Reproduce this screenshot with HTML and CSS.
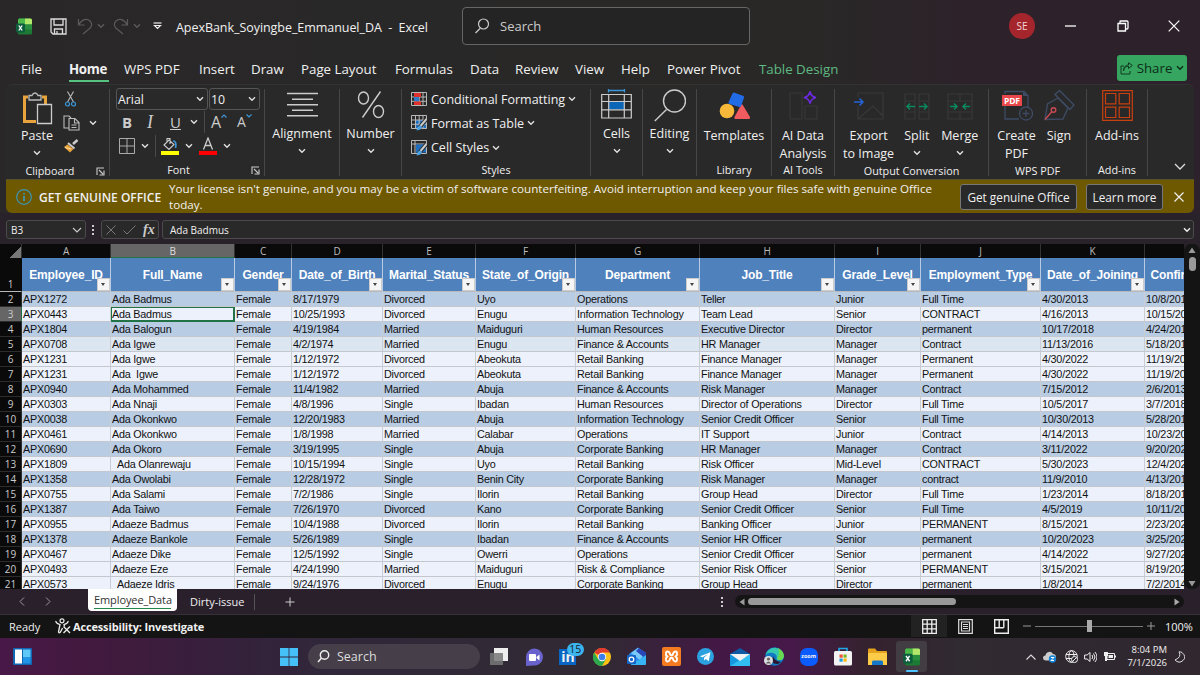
FILE: index.html
```html
<!DOCTYPE html>
<html lang="en">
<head>
    <meta charset="UTF-8" />
    <meta name="viewport" content="width=device-width, initial-scale=1.0" />
    <title>ApexBank_Soyingbe_Emmanuel_DA - Excel</title>
    <link rel="stylesheet" href="styles.css">
</head>
<body>
    <svg class="defs" width="0" height="0">
        <symbol id="chev" viewBox="0 0 8 6"><path d="M1 1.3l3 3 3-3" fill="none" stroke="currentColor" stroke-width="1.4"/></symbol>
        <symbol id="launch" viewBox="0 0 9 9"><path d="M1 8V1h7M3 3l4 4M8 3.5V8H3.5" fill="none" stroke="#ccc" stroke-width="1.1"/></symbol>
        <symbol id="excel" viewBox="0 0 16 16"><rect x="2" width="14" height="16" rx="1.5" fill="#1d7a35"/><path d="M3.500 0H9v6H2V1.500Q2 0 3.500 0z" fill="#4cb84a"/><path d="M9 0h5.500Q16 0 16 1.500V6H9z" fill="#b4e86a"/><path d="M9 6h7v5H9z" fill="#2a8f3e"/><rect y="5" width="9" height="9" rx="1.500" fill="#0d5c3c"/><path d="M2.800 7l3.400 5M6.200 7l-3.400 5" stroke="#fff" stroke-width="1.300"/></symbol>
        <symbol id="grid" viewBox="0 0 16 14"><path d="M.5.5h15v13H.5zM.5 5h15M.5 9.300h15M4.500.5v13M8.200.5v13M12 .5v13" fill="none" stroke="#b8b8b8"/></symbol>
    </svg>

    <div class="titlebar">
        <svg class="app-icon" width="16" height="17"><use href="#excel"/></svg>
        <svg class="save" width="17" height="17" viewBox="0 0 17 17"><path d="M1 1h15v15H3l-2-2zM4 1v6h9V1M4.500 16v-5h8v5M7 16v-3" fill="none" stroke="#ddd" stroke-width="1.300"/></svg>
        <svg class="undo" width="16" height="17" viewBox="0 0 16 17"><path d="M1.500 1v6h6M1.500 7C5 1 10 0 13 3s1.500 6-1 8l-6 5" fill="none" stroke="#5c5a5b" stroke-width="1.200"/></svg>
        <svg class="dim-chev" width="8" height="6"><use href="#chev"/></svg>
        <svg class="redo" width="16" height="17" viewBox="0 0 16 17"><path d="M14.500 1v6h-6M14.500 7C11 1 6 0 3 3S1.500 9 4 11l6 5" fill="none" stroke="#5c5a5b" stroke-width="1.200"/></svg>
        <svg class="dim-chev" width="8" height="6"><use href="#chev"/></svg>
        <svg class="customize" width="9" height="8" viewBox="0 0 9 8"><path d="M.5 1h8" stroke="#eee" stroke-width="1.200"/><path d="M1.500 3.500h6l-3 3z" fill="none" stroke="#eee" stroke-width="1.200"/></svg>
        <span class="doc-name">ApexBank_Soyingbe_Emmanuel_DA&nbsp; -&nbsp; Excel</span>
        <div class="search-box">
            <svg width="16" height="16" viewBox="0 0 16 16"><path d="M6 10.500L1.500 15" stroke="#ccc" stroke-width="1.200"/><circle cx="9.500" cy="6" r="5" fill="none" stroke="#ccc" stroke-width="1.200"/></svg>
            <span>Search</span>
        </div>
        <span class="avatar">SE</span>
        <svg class="win-min" width="11" height="12" viewBox="0 0 11 12"><path d="M0 6h11" stroke="#fff" stroke-width="1.300"/></svg>
        <svg class="win-max" width="12" height="12" viewBox="0 0 12 12"><path d="M1 3.500h7.500V11H1zM3 3.500V1.500q0-.5.5-.5H10q1 0 1 1v6q0 1-1 1H8.500" fill="none" stroke="#fff" stroke-width="1.300"/></svg>
        <svg class="win-close" width="12" height="12" viewBox="0 0 12 12"><path d="M.7.7l10.600 10.600M11.300.7L.7 11.300" stroke="#fff" stroke-width="1.200"/></svg>
    </div>

    <div class="tabs">
        <span class="tab-file">File</span>
        <span class="tab-home">Home</span>
        <span class="tab-wps">WPS PDF</span>
        <span class="tab-insert">Insert</span>
        <span class="tab-draw">Draw</span>
        <span class="tab-page">Page Layout</span>
        <span class="tab-formulas">Formulas</span>
        <span class="tab-data">Data</span>
        <span class="tab-review">Review</span>
        <span class="tab-view">View</span>
        <span class="tab-help">Help</span>
        <span class="tab-pivot">Power Pivot</span>
        <span class="tab-design">Table Design</span>
        <button class="share">
            <svg width="13" height="13" viewBox="0 0 13 13"><path d="M4 4H1v8h9V9M3.500 9C4 5.500 6 4.200 8.500 4.200V6.500L12.300 3.500 8.500.7V3C5 3 3.500 6 3.500 9z" fill="none" stroke="#123b22"/></svg>
            <span>Share</span>
            <svg width="8" height="6"><use href="#chev"/></svg>
        </button>
    </div>

    <div class="ribbon">
        <div class="group clipboard">
            <div class="body">
                <div class="big paste">
                    <svg width="31" height="33" viewBox="0 0 31 33"><path d="M6 5H2.500v24.500H14M20 5h3.500v7" fill="none" stroke="#e8a33d" stroke-width="3"/><path d="M7 3.500h3Q11 1 13 1t3 2.500h3v4.500H7z" fill="#292929" stroke="#bbb" stroke-width="1.300"/><path d="M15.500 12.500h14v19h-14z" fill="#292929" stroke="#ccc" stroke-width="1.300"/></svg>
                    <span>Paste</span>
                    <svg class="chev" width="8" height="6"><use href="#chev"/></svg>
                </div>
                <div class="small-col">
                    <svg width="16" height="16" viewBox="0 0 16 16"><path d="M4.500.5l6 10.500M10.500.5l-6 10.500" stroke="#bbb" stroke-width="1.100"/><circle cx="4.500" cy="13" r="2" fill="none" stroke="#3b96d9" stroke-width="1.200"/><circle cx="10.500" cy="13" r="2" fill="none" stroke="#3b96d9" stroke-width="1.200"/></svg>
                    <div class="copy-row">
                        <svg width="17" height="16" viewBox="0 0 17 16"><path d="M5.500 13H1V1h5l2 2M6 3.500h6l4 4V15H6zM11.500 3.500V8H16M8.500 10h5M8.500 12.500h5" fill="none" stroke="#bbb" stroke-width="1.100"/></svg>
                        <svg class="chev" width="8" height="6"><use href="#chev"/></svg>
                    </div>
                    <svg width="16" height="15" viewBox="0 0 16 15"><path d="M10 5l4.500-4" stroke="#ccc" stroke-width="2.500"/><path d="M5 4l6.500 5.500" stroke="#ccc" stroke-width="2"/><path d="M4.500 5.500L1 8l6 5.500 3.500-3.500z" fill="#e9a23b"/><path d="M2 8.500l6 1.500" stroke="#fbd9a0"/></svg>
                </div>
            </div>
            <div class="caption"><span>Clipboard</span><svg class="launch" width="9" height="9"><use href="#launch"/></svg></div>
        </div>
        <div class="group font">
            <div class="body">
                <div class="font-row">
                    <div class="combo name"><span>Arial</span><svg class="chev" width="8" height="6"><use href="#chev"/></svg></div>
                    <div class="combo size"><span>10</span><svg class="chev" width="8" height="6"><use href="#chev"/></svg></div>
                </div>
                <div class="style-row">
                    <b>B</b><i>I</i><u>U</u><svg class="chev" width="8" height="6"><use href="#chev"/></svg>
                    <span class="vline"></span>
                    <span class="grow">A<svg width="6" height="4" viewBox="0 0 6 4"><path d="M.5 3.500L3 1l2.500 2.500" fill="none" stroke="#3b96d9" stroke-width="1.200"/></svg></span>
                    <span class="shrink">A<svg width="6" height="4" viewBox="0 0 6 4"><path d="M.5.5L3 3 5.500.5" fill="none" stroke="#3b96d9" stroke-width="1.200"/></svg></span>
                </div>
                <div class="color-row">
                    <svg width="16" height="16" viewBox="0 0 16 16"><path d="M.5.5h15v15H.5zM8 .5v15M.5 8h15" fill="none" stroke="#aaa"/></svg>
                    <svg class="chev" width="8" height="6"><use href="#chev"/></svg>
                    <span class="vline"></span>
                    <svg width="18" height="18" viewBox="0 0 18 18"><path d="M3 8l5-5 5 4.500-5 5zM6 5V1.500h3V7" fill="none" stroke="#ccc" stroke-width="1.100"/><path d="M12 4q4 0 2.500 7" fill="none" stroke="#3b96d9" stroke-width="1.700"/><rect y="14" width="18" height="4" fill="#ff0"/></svg>
                    <svg class="chev" width="8" height="6"><use href="#chev"/></svg>
                    <svg width="18" height="18" viewBox="0 0 18 18"><path d="M4.500 12.500L9 1l4.500 11.500M6.200 8.500h5.600" fill="none" stroke="#ccc" stroke-width="1.300"/><rect y="14" width="18" height="4" fill="#f00"/></svg>
                    <svg class="chev" width="8" height="6"><use href="#chev"/></svg>
                </div>
            </div>
            <div class="caption"><span>Font</span><svg class="launch" width="9" height="9"><use href="#launch"/></svg></div>
        </div>
        <div class="group align">
            <div class="big">
                <svg width="31" height="33" viewBox="0 0 31 33"><path d="M0 4.500h31M5 10.200h21M0 15.700h31M5 21.200h21M0 26.700h31" stroke="#ccc" stroke-width="1.400"/></svg>
                <span>Alignment</span>
                <svg class="chev" width="8" height="6"><use href="#chev"/></svg>
            </div>
        </div>
        <div class="group number">
            <div class="big">
                <svg width="28" height="33" viewBox="0 0 28 33"><path d="M23.500 2.500L5.500 28.500" stroke="#ccc" stroke-width="1.400"/><ellipse cx="6.500" cy="9" rx="5" ry="6" fill="none" stroke="#ccc" stroke-width="1.400"/><ellipse cx="21.500" cy="22.500" rx="5" ry="6" fill="none" stroke="#ccc" stroke-width="1.400"/></svg>
                <span>Number</span>
                <svg class="chev" width="8" height="6"><use href="#chev"/></svg>
            </div>
        </div>
        <div class="group styles">
            <div class="body">
                <div class="style-item"><svg width="16" height="14" viewBox="0 0 16 14"><use href="#grid"/><rect x="3" y="1" width="7" height="4" fill="#e0322d"/><rect x="3" y="5" width="5" height="4.500" fill="#2e7cc9"/><rect x="3" y="9.500" width="7" height="3.500" fill="#e0322d"/></svg><span>Conditional Formatting</span><svg class="chev" width="8" height="6"><use href="#chev"/></svg></div>
                <div class="style-item"><svg width="16" height="16" viewBox="0 0 16 16"><rect x="5" y="5" width="11" height="9" fill="#1f6fbe"/><use href="#grid" width="16" height="14"/><path d="M15.500 4L8 13" stroke="#292929" stroke-width="4"/><path d="M15.500 4L9.500 11" stroke="#ccc" stroke-width="2"/><path d="M9.500 10.500q-3 0-4 5 5-.5 5.500-3.500z" fill="#4ea3e3"/></svg><span>Format as Table</span><svg class="chev" width="8" height="6"><use href="#chev"/></svg></div>
                <div class="style-item"><svg width="16" height="16" viewBox="0 0 16 16"><path d="M.5.5h15v13H.5zM.5 4h15M4 .5v13" fill="none" stroke="#b8b8b8"/><rect x="5" y="4.500" width="10" height="8" fill="#1f6fbe"/><path d="M15.500 4L8 13" stroke="#292929" stroke-width="4"/><path d="M15.500 4L9.500 11" stroke="#ccc" stroke-width="2"/><path d="M9.500 10.500q-3 0-4 5 5-.5 5.500-3.500z" fill="#4ea3e3"/></svg><span>Cell Styles</span><svg class="chev" width="8" height="6"><use href="#chev"/></svg></div>
            </div>
            <div class="caption"><span>Styles</span></div>
        </div>
        <div class="group cells">
            <div class="big">
                <svg width="31" height="33" viewBox="0 0 31 33"><path d="M7.500 1.500h16M7.500-.5v4M23.500-.5v4" stroke="#3b96d9" stroke-width="1.300"/><rect x="8" y="12.500" width="15" height="8" fill="#0c66b8"/><path d="M.7 5.500h29.600v23.500H.7zM.7 12.500h29.600M.7 20.800h29.600M7.700 5.500V29M23.300 5.500V29" fill="none" stroke="#ccc" stroke-width="1.200"/></svg>
                <span>Cells</span>
                <svg class="chev" width="8" height="6"><use href="#chev"/></svg>
            </div>
        </div>
        <div class="group editing">
            <div class="big">
                <svg width="32" height="33" viewBox="0 0 32 33"><path d="M12.500 20.500L.8 32" stroke="#ccc" stroke-width="1.400"/><circle cx="20.500" cy="12" r="11" fill="none" stroke="#ccc" stroke-width="1.400"/></svg>
                <span>Editing</span>
                <svg class="chev" width="8" height="6"><use href="#chev"/></svg>
            </div>
        </div>
        <div class="group templates wps">
            <div class="big">
                <svg width="31" height="33" viewBox="0 0 31 33"><circle cx="8" cy="22" r="7.300" fill="#f8b93b"/><path d="M23.500 15.500l7.500 12.500q.5 2-1.500 2h-13q-1.500 0-1-2l6.500-12q.8-1.200 1.500-.5z" fill="#ef5b5f"/><path d="M13.500 4.500q.8-1.200 2-.8l8.500 3q1.500.5 1 2l-3 8.500q-.5 1-1.500.7l-10-3q-1.500-.5-1-1.700z" fill="#226be6"/></svg>
                <span>Templates</span>
            </div>
            <div class="caption"><span>Library</span></div>
        </div>
        <div class="group ai wps">
            <div class="big">
                <svg width="30" height="33" viewBox="0 0 30 33"><path d="M2 4h12v26H2zM17 17h12v13H17z" fill="none" stroke="#383838" stroke-width="1.200"/><path d="M22 2.500q1 5.500 6 6-5 1-6 6-1-5-6-6 5-.5 6-6z" fill="none" stroke="#6c2be0" stroke-width="1.600"/></svg>
                <span>AI Data<br>Analysis</span>
            </div>
            <div class="caption"><span>AI Tools</span></div>
        </div>
        <div class="group output wps">
            <div class="body">
                <div class="big export">
                    <svg width="31" height="33" viewBox="0 0 31 33"><path d="M5 8V4h25v26H5V17M5 30L20 17l10 10" fill="none" stroke="#393939" stroke-width="1.200"/><path d="M1 13h9M6.500 9.500L10 13l-3.500 3.500" fill="none" stroke="#2463d9" stroke-width="1.500"/></svg>
                    <span>Export<br>to Image</span>
                </div>
                <div class="big split">
                    <svg width="26" height="33" viewBox="0 0 26 33"><path d="M1 5h10v25H1zM1 12h10M1 23h10M15 5h10v25H15zM15 12h10M15 23h10" fill="none" stroke="#383838" stroke-width="1.200"/><path d="M3 17.500h8M6 14.500l-3 3 3 3M15 17.500h8M20 14.500l3 3-3 3" fill="none" stroke="#0b8a5d" stroke-width="1.500"/></svg>
                    <span>Split</span>
                    <svg class="chev" width="8" height="6"><use href="#chev"/></svg>
                </div>
                <div class="big merge">
                    <svg width="26" height="33" viewBox="0 0 26 33"><path d="M1 5h24v25H1zM1 12h24M1 23h24M13 5v7M13 23v7" fill="none" stroke="#383838" stroke-width="1.200"/><path d="M3 17.500h7M7 14.500l3 3-3 3M16 17.500h7M19 14.500l-3 3 3 3" fill="none" stroke="#0b8a5d" stroke-width="1.500"/></svg>
                    <span>Merge</span>
                    <svg class="chev" width="8" height="6"><use href="#chev"/></svg>
                </div>
            </div>
            <div class="caption"><span>Output Conversion</span></div>
        </div>
        <div class="group wpspdf wps">
            <div class="body">
                <div class="big create">
                    <svg width="32" height="33" viewBox="0 0 32 33"><path d="M4 5V2.500h19l4 4V19M4 14v16h14" fill="none" stroke="#3d4b63" stroke-width="1.300"/><path d="M22 2v5h5z" fill="#3d4b63"/><rect x="1" y="6" width="20" height="11" fill="#e8474b"/><text x="3" y="14.800" font-size="8.500" font-weight="bold" fill="#fff" font-family="Open Sans, sans-serif" textLength="16">PDF</text><circle cx="25" cy="24.500" r="6.500" fill="#292929" stroke="#3d4b63" stroke-width="1.300"/><path d="M25 21v7M21.500 24.500h7" stroke="#3d4b63" stroke-width="1.300"/></svg>
                    <span>Create<br>PDF</span>
                </div>
                <div class="big sign">
                    <svg width="32" height="33" viewBox="0 0 32 33"><path d="M2 30.500L4.500 15 15 9l10 10-5 11zM12 5.500L16.500 1.500 31 16l-4 4.500z" fill="none" stroke="#3d4b63" stroke-width="1.400"/><path d="M2 30.500l7-8" stroke="#c94a52" stroke-width="1.400"/><circle cx="10.500" cy="21" r="2.300" fill="none" stroke="#c94a52" stroke-width="1.400"/></svg>
                    <span>Sign</span>
                </div>
            </div>
            <div class="caption"><span>WPS PDF</span></div>
        </div>
        <div class="group addins wps">
            <div class="big">
                <svg width="31" height="33" viewBox="0 0 31 33"><path d="M.7 1.700h29.600v29.600H.7zM3.500 4.500h10.300v10.300H3.500zM17.200 4.500h10.300v10.300H17.200zM3.500 18.200h10.300v10.300H3.500zM17.200 18.200h10.300v10.300H17.200z" fill="none" stroke="#c8400f" stroke-width="1.200"/></svg>
                <span>Add-ins</span>
            </div>
            <div class="caption"><span>Add-ins</span></div>
        </div>
        <svg class="collapse" width="12" height="8" viewBox="0 0 12 8"><path d="M1 1l5 5 5-5" fill="none" stroke="#ddd" stroke-width="1.300"/></svg>
    </div>

    <div class="license">
        <svg width="16" height="16" viewBox="0 0 16 16"><circle cx="8" cy="8" r="7.300" fill="none" stroke="#3b96b5" stroke-width="1.200"/><path d="M8 7v5M8 4v1.500" stroke="#3ba0cf" stroke-width="1.500"/></svg>
        <b>GET GENUINE OFFICE</b>
        <p>Your license isn't genuine, and you may be a victim of software counterfeiting. Avoid interruption and keep your files safe with genuine Office<br>today.</p>
        <button class="get">Get genuine Office</button>
        <button class="learn">Learn more</button>
        <svg class="x" width="10" height="10" viewBox="0 0 10 10"><path d="M.5.5l9 9M9.500.5l-9 9" stroke="#eee" stroke-width="1.200"/></svg>
    </div>

    <div class="formula-bar">
        <div class="box cell-ref"><span>B3</span><svg width="10" height="6" viewBox="0 0 10 6"><path d="M1 1l4 4 4-4" fill="none" stroke="#ccc" stroke-width="1.100"/></svg></div>
        <span class="dots"></span>
        <div class="box fx">
            <svg width="10" height="10" viewBox="0 0 10 10"><path d="M.5.5l9 9M9.500.5l-9 9" stroke="#777"/></svg>
            <svg width="13" height="10" viewBox="0 0 13 10"><path d="M.5 5.500l3.500 3.500L12.500.5" fill="none" stroke="#777"/></svg>
            <i>fx</i>
        </div>
        <div class="box content"><span>Ada Badmus</span><svg width="8" height="6"><use href="#chev"/></svg></div>
    </div>

    <div class="sheet">
        <div class="grid-clip">
            <table id="grid-table">
                <colgroup><col class="c-row"><col class="c-a"><col class="c-b"><col class="c-c"><col class="c-d"><col class="c-e"><col class="c-f"><col class="c-g"><col class="c-h"><col class="c-i"><col class="c-j"><col class="c-k"><col class="c-l"></colgroup>
            </table>
        </div>
        <div class="vscroll">
            <svg width="8" height="7" viewBox="0 0 8 7"><path d="M4 .5L7.500 6h-7z" fill="#999"/></svg>
            <span class="thumb"></span>
            <svg class="down" width="8" height="7" viewBox="0 0 8 7"><path d="M4 6.500L.5 1h7z" fill="#999"/></svg>
        </div>
    </div>

    <div class="sheet-tabs">
        <svg class="prev" width="6" height="9" viewBox="0 0 6 9"><path d="M5 .5l-4 4 4 4" fill="none" stroke="#999"/></svg>
        <svg class="next" width="6" height="9" viewBox="0 0 6 9"><path d="M1 .5l4 4-4 4" fill="none" stroke="#999"/></svg>
        <div class="sheet-tab active"><span>Employee_Data</span></div>
        <div class="sheet-tab">Dirty-issue</div>
        <svg class="plus" width="10" height="10" viewBox="0 0 10 10"><path d="M5 .5v9M.5 5h9" stroke="#ccc"/></svg>
        <span class="dots"></span>
        <div class="hscroll">
            <svg width="6" height="8" viewBox="0 0 6 8"><path d="M.5 4L5.500.5v7z" fill="#999"/></svg>
            <span class="thumb"></span>
            <svg class="right" width="6" height="8" viewBox="0 0 6 8"><path d="M5.500 4L.5.5v7z" fill="#aaa"/></svg>
        </div>
    </div>

    <div class="status">
        <span class="ready">Ready</span>
        <svg width="16" height="16" viewBox="0 0 16 16"><circle cx="7" cy="2.800" r="2" fill="none" stroke="#eee" stroke-width="1.200"/><path d="M1 3q-.5 2 4 3.500L3.500 14q1 2 2.500-1l1.500-3M13 3q.5 2-4 3.500l.5 2M8.500 8.500L15 15M15 8.500L8.500 15" fill="none" stroke="#eee" stroke-width="1.300"/></svg>
        <b>Accessibility: Investigate</b>
        <div class="view active"><svg width="15" height="15" viewBox="0 0 15 15"><path d="M.7.7h13.600v13.600H.7zM.7 5.200h13.600M.7 9.800h13.600M5.200.7v13.600M9.800.7v13.600" fill="none" stroke="#eee" stroke-width="1.300"/></svg></div>
        <div class="view"><svg width="15" height="15" viewBox="0 0 15 15"><path d="M.7.7h13.600v13.600H.7zM3.500 3h8v9h-8zM5 5.500h5M5 7.500h5M5 9.500h5" fill="none" stroke="#ddd" stroke-width="1.200"/></svg></div>
        <div class="view"><svg width="15" height="15" viewBox="0 0 15 15"><path d="M.7.7h13.600v13.600H.7zM5.200.7v8M9.800.7v8M.7 8.700h9" fill="none" stroke="#eee" stroke-width="1.400"/></svg></div>
        <svg class="minus" width="8" height="8" viewBox="0 0 8 8"><path d="M0 4h8" stroke="#999"/></svg>
        <div class="zoom-track"><span></span></div>
        <svg class="zoom-plus" width="8" height="8" viewBox="0 0 8 8"><path d="M0 4h8M4 0v8" stroke="#999"/></svg>
        <span class="percent">100%</span>
    </div>

    <div class="taskbar">
        <svg class="widgets" width="19" height="17" viewBox="0 0 19 17"><rect width="19" height="17" rx="1" fill="#1267b4"/><rect x="2" y="1.500" width="7" height="14" fill="#fff"/><rect x="10" y="1.500" width="7.500" height="8" fill="#5fc9f8"/><rect x="10" y="9.500" width="7.500" height="6" fill="#2196e8"/></svg>
        <svg class="start" width="18" height="18" viewBox="0 0 18 18"><path d="M0 0h8.600v8.600H0zM9.400 0H18v8.600H9.400zM0 9.400h8.600V18H0zM9.400 9.400H18V18H9.400z" fill="#45c1f8"/></svg>
        <div class="task-search"><svg width="13" height="13" viewBox="0 0 13 13"><circle cx="7.500" cy="5" r="4.200" fill="none" stroke="#eee" stroke-width="1.400"/><path d="M4.500 8L1 12" stroke="#eee" stroke-width="1.500"/></svg><span>Search</span></div>
        <div class="apps">
            <div><svg width="20" height="18" viewBox="0 0 20 18"><rect x="5" width="14" height="13" fill="#eee"/><rect x="1" y="5" width="13" height="12" fill="#777" opacity=".85"/></svg></div>
            <div><svg width="18" height="18" viewBox="0 0 18 18"><path d="M1 18V9a8.500 8.500 0 1 1 8 8.500z" fill="#6962cc"/><rect x="4" y="6" width="7" height="7" rx="1" fill="#fff"/><path d="M11.500 9l3-2.500v6l-3-2.500z" fill="#fff"/></svg></div>
            <div class="linkedin"><span>in</span><em>15</em></div>
            <div><svg width="18" height="18" viewBox="0 0 18 18"><circle cx="9" cy="9" r="9" fill="#fbc116"/><path d="M9 9L1.200 4.500A9 9 0 0 1 16.800 4.500H9z" fill="#e33b2e"/><path d="M1.200 4.500A9 9 0 0 0 9 18l4-7-8 0z" fill="#2da94f"/><circle cx="9" cy="9" r="4.200" fill="#fff"/><circle cx="9" cy="9" r="3.300" fill="#3f7de8"/></svg></div>
            <div><svg width="20" height="19" viewBox="0 0 20 19"><path d="M2 7l9-6.500L19 6v10q0 2-2 2H4z" fill="#2c8df0"/><path d="M4 6l7-5 7 5-5 7z" fill="#7ac8f8"/><path d="M9 4l10 8V6l-7-5z" fill="#2946b8"/><path d="M4 18L19 8v9q0 1-1 1z" fill="#36b4f4"/><rect y="8" width="9" height="9" rx="1" fill="#1465c6"/><circle cx="4.500" cy="12.500" r="2.300" fill="none" stroke="#fff" stroke-width="1.300"/></svg></div>
            <div><svg width="19" height="19" viewBox="0 0 19 19"><rect width="19" height="19" rx="2" fill="#f47b20"/><path d="M4 9.500V6q0-1.500 1.500-1.500T8 6.500v1q1.500 1.500 3 0v-1q1-2 2.500-2T15 6v2l-1.500 1.500L15 11v2q0 1.500-1.500 1.500t-2.500-2v-1q-1.500-1.500-3 0v1q-1 2-2.500 2T4 13v-2l1.500-1.500L4 8" fill="none" stroke="#fff" stroke-width="1.800"/></svg></div>
            <div><svg width="17" height="17" viewBox="0 0 17 17"><circle cx="8.500" cy="8.500" r="8.500" fill="#2ba2df"/><path d="M3 8.300l10.500-4-1.800 9-3-2.300-1.500 1.500-.3-2.700 4-3.500-5.300 3z" fill="#fff"/></svg></div>
            <div><svg width="20" height="18" viewBox="0 0 20 18"><path d="M0 6l10-6 10 6v12H0z" fill="#0f5aa5"/><path d="M0 6l20 12H0z" fill="#1698e0"/><path d="M20 6L0 18h20z" fill="#31bff2"/><path d="M0 6h20l-10 7z" fill="#f2f2f2"/></svg></div>
            <div><svg width="20" height="19" viewBox="0 0 20 19"><circle cx="10.500" cy="9.500" r="9.300" fill="#0f79c4"/><path d="M1.500 8A9.300 9.300 0 0 1 19.800 9q0 4-4 4.300-4 .2-3-2.300Q13 7 9 6 4 5 1.500 8z" fill="#35c7b0"/><path d="M14 1q6 3 5.800 8-.2 4-4 4.200L13 12q3-5 1-11z" fill="#69d84f"/><path d="M9 9q1 5 8 6l-3 2Q6 18 9 9z" fill="#2a1832"/><circle cx="4.500" cy="13.500" r="4.500" fill="#ddd"/><circle cx="4.500" cy="12" r="1.600" fill="#666"/><path d="M1.800 16.500q2.700-4 5.400 0z" fill="#666"/></svg></div>
            <div class="zoom-app"><span>zoom</span></div>
            <div><svg width="18" height="19" viewBox="0 0 18 19"><path d="M5 5V1.500h8V5" fill="none" stroke="#21a7e8" stroke-width="1.600"/><rect y="4" width="18" height="14.500" rx="1.500" fill="#f3f3f3"/><path d="M5.500 7.500h3.200v3.200H5.500z" fill="#ef5130"/><path d="M9.500 7.500h3.200v3.200H9.500z" fill="#7db829"/><path d="M5.500 11.500h3.200v3.200H5.500z" fill="#1c9fdf"/><path d="M9.500 11.500h3.200v3.200H9.500z" fill="#fbb813"/></svg></div>
            <div><svg width="19" height="18" viewBox="0 0 19 18"><path d="M0 1.500Q0 .5 1 .5h6l2 2.500h9q1 0 1 1V17H0z" fill="#e5a21c"/><path d="M0 5h19v12H0z" fill="#fccc48"/><path d="M4 17v-3q0-1.500 1.500-1.500h8q1.500 0 1.500 1.500v3z" fill="#1577c8"/></svg></div>
            <div class="open"><svg width="17" height="18"><use href="#excel"/></svg></div>
        </div>
        <div class="tray">
            <svg class="up" width="10" height="6" viewBox="0 0 10 6"><path d="M.5 5.500L5 1l4.500 4.500" fill="none" stroke="#ddd" stroke-width="1.100"/></svg>
            <svg class="cloud" width="14" height="12" viewBox="0 0 14 12"><path d="M2.500 9.500a2.500 2.500 0 0 1 0-5A4 4 0 0 1 10 3q3 0 3 3.500T10 9.500z" fill="#ccc"/><circle cx="9.500" cy="8" r="3.700" fill="#1583d8"/><path d="M8 6.500h3L8 9.500h3" stroke="#fff" fill="none"/></svg>
            <svg class="globe" width="13" height="13" viewBox="0 0 13 13"><circle cx="6.500" cy="6.500" r="5.800" fill="none" stroke="#eee"/><ellipse cx="6.500" cy="6.500" rx="2.600" ry="5.800" fill="none" stroke="#eee"/><path d="M1 4.500h11M1 8.500h6" stroke="#eee"/><circle cx="9.500" cy="9.500" r="3" fill="#302a33" stroke="#eee"/><path d="M7.500 11.500l4-4" stroke="#eee"/></svg>
            <svg class="sound" width="13" height="12" viewBox="0 0 13 12"><path d="M.6 4h2.500L6 1.500v9L3.100 8H.6zM8 4q1.500 2 0 4M9.500 2.500q3 3.500 0 7M11 1q4 5 0 10" fill="none" stroke="#eee"/></svg>
            <svg class="battery" width="13" height="11" viewBox="0 0 13 11"><path d="M4 2.500h7.500v6H4zM12.500 4.500v2" fill="none" stroke="#eee"/><path d="M5.500 4H10v3H5.500zM1 1h4v4H1zM2 5h2v5H2z" fill="#eee"/></svg>
            <div class="clock">8:04 PM<br>7/1/2026</div>
            <svg class="moon" width="11" height="12" viewBox="0 0 11 12"><path d="M5 .8q3 5.200-4 8.200 4 4 8 .5T8 1.500Q7 .8 5 .8z" fill="none" stroke="#ddd"/></svg>
        </div>
    </div>
    <script src="script.js"></script>
</body>
</html>
```
FILE: styles.css
```css
* {
    box-sizing: border-box;
}
body {
    margin: 0;
    width: 1200px;
    height: 675px;
    overflow: hidden;
    display: flex;
    flex-direction: column;
    background: linear-gradient(90deg, #2a2729, #292828 30%, #292827 68%, #2d222a 80%, #2d212b);
    color: #f0f0f0;
    font-family: "Open Sans", "Noto Sans", sans-serif;
    font-size: 13px;
    white-space: nowrap;
}
svg {
    flex: none;
    display: block;
}
.defs {
    position: absolute;
}
button {
    font: inherit;
    padding: 0;
    white-space: nowrap;
}
.chev {
    color: #e0e0e0;
}

/* title bar */
.titlebar {
    height: 52px;
    flex: none;
    display: flex;
    align-items: center;
    padding-left: 16px;
}
.save {
    margin-left: 18px;
}
.undo {
    margin-left: 10px;
}
.dim-chev {
    color: #5c5a5b;
    margin-left: 4px;
}
.redo {
    margin-left: 8px;
}
.customize {
    margin-left: 12px;
}
.doc-name {
    margin-left: 14px;
    width: 286px;
    font-size: 12.5px;
    letter-spacing: -.05px;
    padding-top: 3px;
}
.search-box {
    width: 288px;
    height: 38px;
    flex: none;
    border: 1px solid #666;
    border-radius: 4px;
    background: #252424;
    display: flex;
    align-items: center;
    gap: 10px;
    padding-left: 11px;
    padding-bottom: 1px;
    font-size: 13px;
    color: #ccc;
}
.avatar {
    width: 26px;
    height: 26px;
    border-radius: 50%;
    background: #a4262c;
    color: #f3d6d7;
    font-size: 10px;
    line-height: 26px;
    text-align: center;
    margin-left: 259px;
}
.win-min {
    margin-left: 30px;
}
.win-max {
    margin-left: 41px;
}
.win-close {
    margin-left: 39px;
}

/* ribbon tabs */
.tabs {
    height: 32px;
    flex: none;
    display: flex;
    align-items: flex-start;
    padding-left: 21px;
    line-height: 20px;
    padding-top: 7px;
    font-size: 13.3px;
}
.tabs > span {
    flex: none;
}
.tab-file { width: 48px; }
.tab-home { width: 40px; margin-right: 15px; font-weight: bold; border-bottom: 2px solid #55c27f; padding-bottom: 1px; letter-spacing: -.3px; }
.tab-wps { width: 75px; }
.tab-insert { width: 52px; }
.tab-draw { width: 50px; }
.tab-page { width: 94px; }
.tab-formulas { width: 75px; }
.tab-data { width: 45px; }
.tab-review { width: 60px; }
.tab-view { width: 46px; }
.tab-help { width: 46px; }
.tab-pivot { width: 92px; }
.tab-design { width: 358px; color: #5fba83; }
.share {
    width: 70px;
    height: 26px;
    margin-top: -4px;
    border: 0;
    border-radius: 3px;
    background: #35a55f;
    color: #0c2c18;
    display: flex;
    align-items: center;
    justify-content: center;
    gap: 4px;
}

/* ribbon */
.ribbon {
    height: 95px;
    flex: none;
    margin: 0 6px;
    background: #292929;
    border-radius: 6px 6px 0 0;
    border-top: 1px solid #333;
    display: flex;
    padding-left: 1px;
}
.group {
    flex: none;
    display: flex;
    flex-direction: column;
    height: 87px;
    margin-top: 4px;
    border-right: 1px solid #474747;
}
.clipboard { width: 103px; }
.font { width: 155px; }
.align { width: 75px; }
.number { width: 62px; }
.styles { width: 189px; }
.cells { width: 52px; }
.editing { width: 54px; }
.templates { width: 75px; }
.ai { width: 63px; }
.output { width: 154px; }
.wpspdf { width: 98px; }
.addins { width: 61px; }
.body {
    display: flex;
    height: 74px;
}
.big {
    display: flex;
    flex-direction: column;
    align-items: center;
    height: 74px;
    text-align: center;
    line-height: 18px;
    font-size: 12.5px;
}
.align .big svg:first-child, .number .big svg:first-child {
    position: relative;
    top: 0;
}
.big span {
    margin-top: 3px;
}
.big .chev {
    margin-top: 5px;
}
.wps .big span {
    margin-top: 5px;
    line-height: 17.5px;
}
.wps .chev {
    margin-top: 5px;
}
.caption {
    position: relative;
    height: 14px;
    line-height: 15px;
    font-size: 10.8px;
    text-align: center;
}
.launch {
    position: absolute;
    right: 4px;
    top: 4px;
}
.clipboard .caption span {
    margin-right: 16px;
}
.font .caption span {
    margin-right: 17px;
}
.paste {
    width: 60px;
    padding-top: 3px;
}
.paste span {
    margin-top: 2px;
}
.small-col {
    display: flex;
    flex-direction: column;
    gap: 8px;
    padding-top: 2px;
    margin-left: -4px;
}
.copy-row {
    display: flex;
    align-items: center;
    gap: 9px;
}
.font .body {
    flex-direction: column;
    padding-left: 6px;
    margin-top: -1px;
    height: 75px;
}
.font-row {
    display: flex;
    gap: 1px;
}
.combo {
    height: 22px;
    border: 1px solid #555;
    border-radius: 3px;
    display: flex;
    align-items: center;
    justify-content: space-between;
    padding: 0 3px 0 1px;
    font-size: 12.3px;
}
.combo.name { width: 92px; }
.combo.size { width: 51px; }
.style-row {
    display: flex;
    align-items: center;
    height: 24px;
    font-size: 15px;
    color: #ccc;
    padding-left: 6px;
}
.style-row b { width: 25px; }
.style-row i {
    width: 23px;
    font-family: "Liberation Serif", serif;
    font-size: 18px;
}
.style-row u { width: 20px; }
.vline {
    width: 1px;
    height: 22px;
    background: #4a4a4a;
    margin: 0 6px;
}
.grow, .shrink {
    display: flex;
    align-items: flex-start;
    line-height: 16px;
}
.grow { width: 26px; font-size: 16px; }
.shrink { font-size: 14px; }
.color-row {
    display: flex;
    align-items: center;
    padding-left: 3px;
    height: 24px;
}
.color-row .chev {
    margin: 0 6px;
}
.color-row .vline {
    margin: 0 5px 0 0;
}
.styles .body {
    flex-direction: column;
    padding: 0 0 0 9px;
    margin-top: -2px;
    height: 76px;
}
.style-item {
    display: flex;
    align-items: center;
    height: 24.3px;
    font-size: 12.5px;
}
.style-item span {
    margin: 0 3px 0 4px;
}
.output .export { width: 69px; }
.output .split { width: 30px; }
.output .merge { width: 58px; }
.create { width: 55px; }
.sign { width: 30px; }
.collapse {
    margin: 78px 0 0 26px;
}

/* license warning */
.license {
    height: 34px;
    flex: none;
    margin: 0 6px;
    background: #6e5800;
    border-top: 1px solid #55502f;
    border-radius: 0 0 6px 6px;
    display: flex;
    align-items: center;
    padding-left: 10px;
    font-size: 12px;
}
.license b {
    width: 130px;
    margin-left: 7px;
    font-weight: 600;
    padding-top: 2px;
}
.license p {
    width: 791px;
    margin: 0;
    padding-top: 1px;
    line-height: 16.500px;
    font-size: 11.650px;
}
.license button {
    height: 26px;
    flex: none;
    background: #292929;
    color: #f0f0f0;
    border: 1px solid #777;
    border-radius: 3px;
    font-size: 11.8px;
}
.license .get { width: 117px; }
.license .learn {
    width: 77px;
    margin-left: 9px;
}
.x {
    margin-left: 11px;
}

/* formula bar */
.formula-bar {
    height: 31px;
    flex: none;
    background: #2a222a;
    display: flex;
    align-items: center;
    padding: 2px 6px 0;
    font-size: 10px;
}
.box {
    height: 19px;
    border: 1px solid #4b4b4b;
    border-radius: 3px;
    background: #292929;
    display: flex;
    align-items: center;
}
.cell-ref {
    width: 80px;
    justify-content: space-between;
    padding: 0 3px 0 4px;
}
.dots {
    width: 2px;
    height: 10px;
    background: repeating-linear-gradient(#ccc 0 2px, transparent 2px 4px);
}
.formula-bar .dots {
    margin: 0 7px 0 6px;
}
.fx {
    width: 58px;
    padding-left: 4px;
    gap: 7px;
}
.fx i {
    font: italic bold 14px "Liberation Serif", serif;
    color: #ccc;
    line-height: 14px;
}
.content {
    flex: 1;
    margin-left: 3px;
    padding: 0 2px 0 7px;
    justify-content: space-between;
}

/* worksheet */
.sheet {
    height: 345px;
    flex: none;
    display: flex;
    background: #2a212b;
}
.grid-clip {
    width: 1184px;
    overflow: hidden;
}
table {
    width: 1230px;
    table-layout: fixed;
    border-collapse: separate;
    border-spacing: 0;
    font-family: "Liberation Sans", Arial, sans-serif;
    font-size: 10.8px;
    letter-spacing: -.22px;
    color: #111;
    background: #0a0a0a;
}
.c-row { width: 22px; }
.c-a { width: 89px; }
.c-b { width: 124px; }
.c-c { width: 57px; }
.c-d { width: 91px; }
.c-e { width: 93px; }
.c-f { width: 100px; }
.c-g { width: 124px; }
.c-h { width: 135px; }
.c-i { width: 86px; }
.c-j { width: 120px; }
.c-k { width: 104px; }
.c-l { width: 85px; }
th, td {
    padding: 0;
    overflow: hidden;
}
.letters th {
    height: 14px;
    font: 10px "Open Sans", sans-serif;
    line-height: 14px;
    color: #bbb;
    border-right: 1px solid #333;
}
.letters th.picked {
    background: #666;
    color: #ddd;
    box-shadow: inset 0 -1px #217346;
}
.letters th.corner {
    background: linear-gradient(135deg, transparent 66%, #777 67%);
}
.num {
    font: 10px "Open Sans", sans-serif;
    letter-spacing: 0;
    color: #ccc;
    background: #0a0a0a;
    text-align: center;
    border-bottom: 1px solid #2c2c2c;
    line-height: 14px;
}
.fields td {
    height: 34px;
    position: relative;
    background: #4f81bd;
    color: #fff;
    font-weight: bold;
    font-size: 12px;
    letter-spacing: -.15px;
    text-align: center;
    border-right: 1px solid #b9cbe2;
    border-bottom: 1px solid #b9b9b9;
}
.fields .num {
    background: #0a0a0a;
    color: #ccc;
    font-weight: normal;
    font-size: 10px;
    vertical-align: bottom;
    border-right: 1px solid #0a0a0a;
}
.filter {
    position: absolute;
    right: 0;
    bottom: 0;
    width: 13px;
    height: 13px;
    background: #f5f5f5;
    border: 1px solid #ccc;
}
.filter::after {
    content: "";
    position: absolute;
    left: 3px;
    top: 4px;
    border: 2.500px solid transparent;
    border-top: 3px solid #444;
    border-bottom: 0;
}
.row td {
    height: 15px;
    line-height: 14px;
    padding-left: 1px;
    border-right: 1px solid #c9cdd4;
    border-bottom: 1px solid #c4c8ce;
    background: #ecf1fb;
    white-space: pre;
}
.row .num {
    padding: 0;
    background: #0a0a0a;
    border-color: #2c2c2c;
}
.row .num.picked {
    background: #666;
    border-right-color: #217346;
}
.row.dark td:not(.num) {
    background: #b8cce4;
}
.row.mid td:not(.num) {
    background: #dce6f1;
}
.row td.selected {
    box-shadow: inset 0 0 0 1px #217346;
    border-color: #217346;
}
.vscroll {
    width: 16px;
    background: #141414;
    border-radius: 7px;
    display: flex;
    flex-direction: column;
    align-items: center;
    padding-top: 3px;
}
.vscroll .thumb {
    width: 7px;
    height: 14px;
    margin-top: 3px;
    border-radius: 4px;
    background: #999;
}
.vscroll .down {
    margin-top: auto;
    margin-bottom: 2px;
}

/* sheet tabs */
.sheet-tabs {
    height: 25px;
    flex: none;
    background: #2a202b;
    display: flex;
    align-items: center;
    font-size: 11px;
    padding-left: 19px;
}
.next {
    margin-left: 20px;
}
.sheet-tab {
    height: 16px;
    line-height: 16px;
    padding: 0 10px 0 9px;
    border-right: 1px solid #555;
}
.sheet-tab.active {
    width: 89px;
    height: 22px;
    align-self: flex-start;
    margin: 0 4px 0 37px;
    padding: 2px 6px;
    background: #fff;
    color: #333;
    border: 0;
    border-radius: 0 0 4px 4px;
}
.active span {
    display: block;
    line-height: 17px;
    letter-spacing: -.1px;
    border-bottom: 1.500px solid #21874b;
}
.plus {
    margin-left: 30px;
}
.sheet-tabs .dots {
    margin-left: 426px;
}
.hscroll {
    width: 449px;
    height: 13px;
    margin-left: 12px;
    background: #141414;
    border-radius: 7px;
    display: flex;
    align-items: center;
    padding: 0 4px;
}
.hscroll .thumb {
    width: 208px;
    height: 7px;
    margin-left: 3px;
    border-radius: 4px;
    background: #999;
}
.hscroll .right {
    margin-left: auto;
}

/* status bar */
.status {
    height: 24px;
    flex: none;
    background: #141414;
    border-top: 1px solid #383038;
    display: flex;
    align-items: center;
    padding: 0 0 1px 9px;
    font-size: 11px;
}
.ready {
    width: 46px;
}
.status b {
    margin-left: 2px;
    letter-spacing: -.15px;
    flex: 0 0 838px;
}
.view {
    width: 36px;
    height: 22px;
    flex: none;
    display: flex;
    align-items: center;
    justify-content: center;
}
.view.active {
    background: #222;
}
.minus {
    margin-left: 4px;
}
.zoom-track {
    width: 108px;
    height: 1px;
    flex: none;
    margin: 0 4px;
    background: #777;
    display: flex;
    align-items: center;
}
.zoom-track span {
    width: 5px;
    height: 12px;
    flex: none;
    margin-left: 52px;
    background: #aaa;
}
.percent {
    margin-left: 10px;
}

/* taskbar */
.taskbar {
    flex: 1;
    display: flex;
    align-items: center;
    background: linear-gradient(90deg, #481948, #43193f 7%, #34213b 20%, #30283a 28%, #312a33 50%, #431845 60%, #46194a 66%, #35222f 72%, #302a31 80%, #30272f);
    padding-left: 13px;
}
.start {
    margin-left: 248px;
}
.task-search {
    width: 172px;
    height: 25px;
    flex: none;
    margin-left: 10px;
    border-radius: 13px;
    background: #463f49;
    display: flex;
    align-items: center;
    gap: 7px;
    padding-left: 9px;
    font-size: 12.5px;
    color: #ddd;
}
.apps {
    display: flex;
    margin-left: 2px;
}
.apps > div {
    width: 34.400px;
    height: 31px;
    display: flex;
    align-items: center;
    justify-content: center;
    position: relative;
}
.linkedin span {
    width: 17px;
    height: 16px;
    background: #0a66c2;
    font-weight: bold;
    font-size: 14px;
    line-height: 15px;
    text-align: center;
}
.linkedin em {
    position: absolute;
    left: 16px;
    top: 2px;
    width: 17px;
    height: 13px;
    border-radius: 7px;
    background: #3cb4ee;
    color: #14222c;
    font: 10.500px/13px "Open Sans", sans-serif;
    text-align: center;
}
.zoom-app span {
    width: 18px;
    height: 18px;
    border-radius: 7px;
    background: #0b5cff;
    font-size: 5.5px;
    font-weight: bold;
    line-height: 17px;
    text-align: center;
}
.apps > .open {
    background: #413d43;
    border-radius: 3px;
    width: 31px;
    margin-left: 1px;
}
.open::after {
    content: "";
    position: absolute;
    bottom: 0;
    left: 10px;
    width: 12px;
    height: 2px;
    border-radius: 1px;
    background: #4cc2ff;
}
.tray {
    margin-left: auto;
    display: flex;
    align-items: center;
    padding-right: 15px;
}
.cloud { margin-left: 7px; }
.globe { margin-left: 8px; }
.sound { margin-left: 6px; }
.battery { margin-left: 6px; }
.clock {
    width: 51px;
    font-size: 9.500px;
    line-height: 12.500px;
    text-align: right;
}
.moon { margin-left: 7px; }
```
FILE: script.js
```js
const fields = ['Employee_ID', 'Full_Name', 'Gender', 'Date_of_Birth', 'Marital_Status', 'State_of_Origin', 'Department', 'Job_Title', 'Grade_Level', 'Employment_Type', 'Date_of_Joining', 'Confirmation'];

const rows = [
    'APX1272|Ada Badmus|Female|8/17/1979|Divorced|Uyo|Operations|Teller|Junior|Full Time|4/30/2013|10/8/2013',
    'APX0443|Ada Badmus|Female|10/25/1993|Divorced|Enugu|Information Technology|Team Lead|Senior|CONTRACT|4/16/2013|10/15/2013',
    'APX1804|Ada Balogun|Female|4/19/1984|Married|Maiduguri|Human Resources|Executive Director|Director|permanent|10/17/2018|4/24/2019',
    'APX0708|Ada Igwe|Female|4/2/1974|Married|Enugu|Finance & Accounts|HR Manager|Manager|Contract|11/13/2016|5/18/2017',
    'APX1231|Ada Igwe|Female|1/12/1972|Divorced|Abeokuta|Retail Banking|Finance Manager|Manager|Permanent|4/30/2022|11/19/2022',
    'APX1231|Ada  Igwe|Female|1/12/1972|Divorced|Abeokuta|Retail Banking|Finance Manager|Manager|Permanent|4/30/2022|11/19/2022',
    'APX0940|Ada Mohammed|Female|11/4/1982|Married|Abuja|Finance & Accounts|Risk Manager|Manager|Contract|7/15/2012|2/6/2013',
    'APX0303|Ada Nnaji|Female|4/8/1996|Single|Ibadan|Human Resources|Director of Operations|Director|Full Time|10/5/2017|3/7/2018',
    'APX0038|Ada Okonkwo|Female|12/20/1983|Married|Abuja|Information Technology|Senior Credit Officer|Senior|Full Time|10/30/2013|5/28/2014',
    'APX0461|Ada Okonkwo|Female|1/8/1998|Married|Calabar|Operations|IT Support|Junior|Contract|4/14/2013|10/23/2013',
    'APX0690|Ada Okoro|Female|3/19/1995|Single|Abuja|Corporate Banking|HR Manager|Manager|Contract|3/11/2022|9/20/2022',
    'APX1809|  Ada Olanrewaju|Female|10/15/1994|Single|Uyo|Retail Banking|Risk Officer|Mid-Level|CONTRACT|5/30/2023|12/4/2023',
    'APX1358|Ada Owolabi|Female|12/28/1972|Single|Benin City|Corporate Banking|Risk Manager|Manager|contract|11/9/2010|4/13/2011',
    'APX0755|Ada Salami|Female|7/2/1986|Single|Ilorin|Retail Banking|Group Head|Director|Full Time|1/23/2014|8/18/2014',
    'APX1387|Ada Taiwo|Female|7/26/1970|Divorced|Kano|Corporate Banking|Senior Credit Officer|Senior|Full Time|4/5/2019|10/11/2019',
    'APX0955|Adaeze Badmus|Female|10/4/1988|Divorced|Ilorin|Retail Banking|Banking Officer|Junior|PERMANENT|8/15/2021|2/23/2022',
    'APX1378|Adaeze Bankole|Female|5/26/1989|Single|Ibadan|Finance & Accounts|Senior HR Officer|Senior|permanent|10/20/2023|3/25/2024',
    'APX0467|Adaeze Dike|Female|12/5/1992|Single|Owerri|Operations|Senior Credit Officer|Senior|permanent|4/14/2022|9/27/2022',
    'APX0493|Adaeze Eze|Female|4/24/1990|Married|Maiduguri|Risk & Compliance|Senior Risk Officer|Senior|PERMANENT|3/15/2021|8/19/2021',
    'APX0573|  Adaeze Idris|Female|9/24/1976|Divorced|Enugu|Corporate Banking|Group Head|Director|permanent|1/8/2014|7/2/2014'
];

// band shade per row, starting at row 2
const shades = ['dark', '', 'dark', 'mid', '', '', 'dark', '', 'dark', '', 'dark', '', 'dark', '', 'dark', '', 'dark', '', '', ''];

const table = document.getElementById('grid-table');
const escape = text => text.replace('&', '&amp;');

let html = '<tr class="letters"><th class="corner"></th>';
'ABCDEFGHIJK'.split('').forEach(l => html += `<th class="${l === 'B' ? 'picked' : ''}">${l}</th>`);
html += '<th></th></tr><tr class="fields"><td class="num">1</td>';
fields.forEach(f => html += `<td>${f}<span class="filter"></span></td>`);
html += '</tr>';

rows.forEach((row, i) => {
    html += `<tr class="row ${shades[i]}"><td class="num${i === 1 ? ' picked' : ''}">${i + 2}</td>`;
    row.split('|').forEach((cell, c) => {
        html += `<td class="${i === 1 && c === 1 ? 'selected' : ''}">${escape(cell)}</td>`;
    });
    html += '</tr>';
});
table.insertAdjacentHTML('beforeend', html);
```
